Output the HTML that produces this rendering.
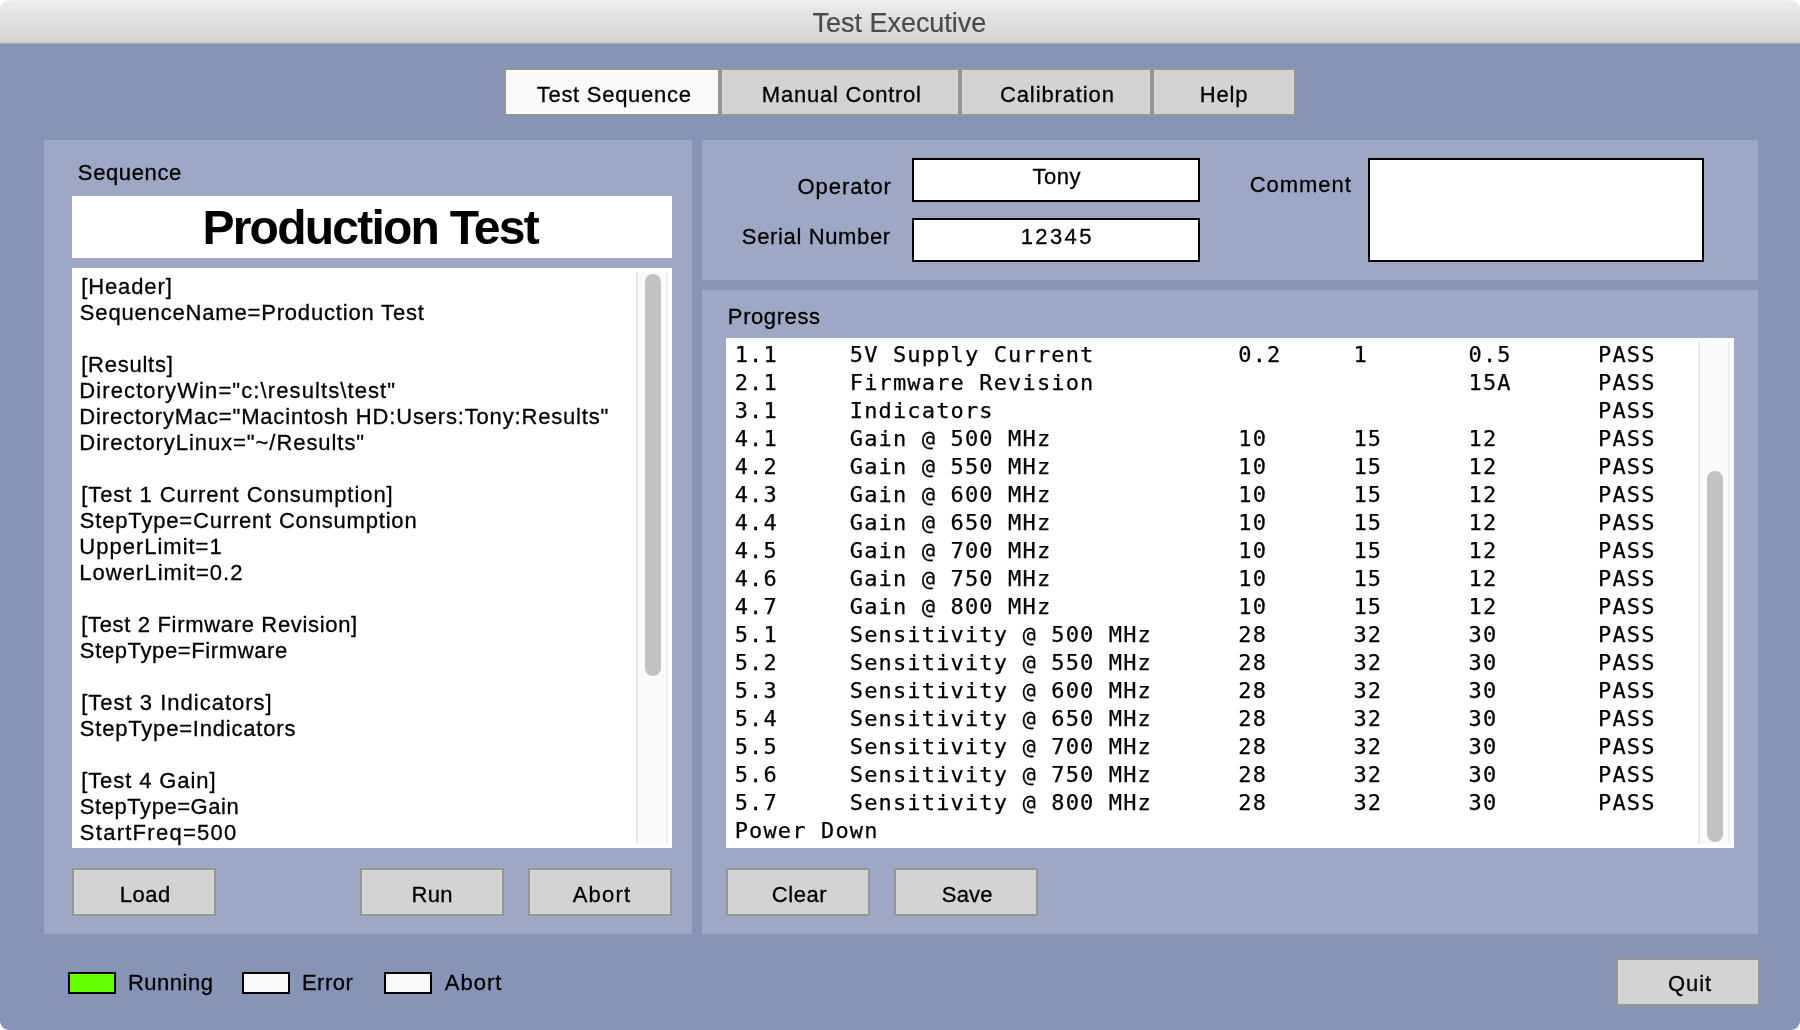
<!DOCTYPE html>
<html>
<head>
<meta charset="utf-8">
<title>Test Executive</title>
<style>
html,body{margin:0;padding:0;}
body{width:1800px;height:1030px;overflow:hidden;background:#fff;font-family:"Liberation Sans",sans-serif;color:#000;position:relative;}
#win{position:absolute;left:0;top:0;width:1800px;height:1030px;will-change:transform;}
#winbg{position:absolute;left:0;top:43px;width:1800px;height:987px;background:#8695b7;border-radius:0 0 9px 9px;}
#titlebar{position:absolute;left:0;top:0;width:1800px;height:44px;background:linear-gradient(#f4f4f4 0px,#ebebeb 2px,#d3d3d3 42px,#adadad 43.5px);border-radius:9px 9px 0 0;}
.abs{position:absolute;box-sizing:border-box;}
.panel{background:#9ea8c5;}
.t{position:absolute;white-space:pre;font-family:"Liberation Sans",sans-serif;-webkit-text-stroke:0.3px #000;}
#title{-webkit-text-stroke:0.2px #4a4a4a;}
#ptest{-webkit-text-stroke:0;}
.tab{position:absolute;top:68px;height:48px;box-sizing:border-box;border:2px solid #969696;background:#d3d3d3;}
.tab.sel{background:#fafafa;}
.btn{position:absolute;height:48px;width:144px;box-sizing:border-box;border:2px solid #969696;background:#d3d3d3;}
.white{background:#fff;}
.inp{position:absolute;box-sizing:border-box;border:2px solid #000;background:#fff;}
#seq{position:absolute;left:72px;top:268px;width:600px;height:580px;background:#fff;overflow:hidden;}
#prog{position:absolute;left:726px;top:338px;width:1008px;height:510px;background:#fff;overflow:hidden;}
#progtxt{position:absolute;left:8.7px;top:2.5px;font-family:"DejaVu Sans Mono","Liberation Mono",monospace;font-size:22px;letter-spacing:1.145px;-webkit-text-stroke:0.25px #000;}
.pr{height:28px;line-height:28px;white-space:pre;}
.track{position:absolute;background:#fafafa;border-left:2px solid #e8e8e8;border-right:2px solid #eeeeee;box-sizing:border-box;}
.thumb{position:absolute;background:#c2c2c2;border-radius:8px;}
.ind{position:absolute;top:972px;width:48px;height:22px;box-sizing:border-box;border:2px solid #000;background:#fafafa;}
</style>
</head>
<body>
<div id="win">
<div id="winbg"></div>
<div id="titlebar"></div>

<div class="tab sel" style="left:504px;width:216px;"></div>
<div class="tab" style="left:720px;width:240px;"></div>
<div class="tab" style="left:960px;width:192px;"></div>
<div class="tab" style="left:1152px;width:144px;"></div>

<div class="abs panel" style="left:44px;top:140px;width:648px;height:794px;"></div>
<div class="abs panel" style="left:702px;top:140px;width:1056px;height:140px;"></div>
<div class="abs panel" style="left:702px;top:290px;width:1056px;height:644px;"></div>

<div class="abs white" style="left:72px;top:196px;width:600px;height:62px;"></div>

<div id="seq">
<div class="track" style="left:564px;top:4px;width:32px;height:572px;"></div>
<div class="thumb" style="left:573px;top:6px;width:16px;height:402px;"></div>
</div>

<div class="btn" style="left:72px;top:868px;"></div>
<div class="btn" style="left:360px;top:868px;"></div>
<div class="btn" style="left:528px;top:868px;"></div>

<div class="inp" style="left:912px;top:158px;width:288px;height:44px;"></div>
<div class="inp" style="left:912px;top:218px;width:288px;height:44px;"></div>
<div class="inp" style="left:1368px;top:158px;width:336px;height:104px;"></div>

<div id="prog">
<div id="progtxt">
<div class="pr">1.1     5V Supply Current          0.2     1       0.5      PASS</div>
<div class="pr">2.1     Firmware Revision                          15A      PASS</div>
<div class="pr">3.1     Indicators                                          PASS</div>
<div class="pr">4.1     Gain @ 500 MHz             10      15      12       PASS</div>
<div class="pr">4.2     Gain @ 550 MHz             10      15      12       PASS</div>
<div class="pr">4.3     Gain @ 600 MHz             10      15      12       PASS</div>
<div class="pr">4.4     Gain @ 650 MHz             10      15      12       PASS</div>
<div class="pr">4.5     Gain @ 700 MHz             10      15      12       PASS</div>
<div class="pr">4.6     Gain @ 750 MHz             10      15      12       PASS</div>
<div class="pr">4.7     Gain @ 800 MHz             10      15      12       PASS</div>
<div class="pr">5.1     Sensitivity @ 500 MHz      28      32      30       PASS</div>
<div class="pr">5.2     Sensitivity @ 550 MHz      28      32      30       PASS</div>
<div class="pr">5.3     Sensitivity @ 600 MHz      28      32      30       PASS</div>
<div class="pr">5.4     Sensitivity @ 650 MHz      28      32      30       PASS</div>
<div class="pr">5.5     Sensitivity @ 700 MHz      28      32      30       PASS</div>
<div class="pr">5.6     Sensitivity @ 750 MHz      28      32      30       PASS</div>
<div class="pr">5.7     Sensitivity @ 800 MHz      28      32      30       PASS</div>
<div class="pr">Power Down</div>

</div>
<div class="track" style="left:972px;top:4px;width:32px;height:502px;"></div>
<div class="thumb" style="left:981px;top:133px;width:16px;height:371px;"></div>
</div>

<div class="btn" style="left:726px;top:868px;"></div>
<div class="btn" style="left:894px;top:868px;"></div>

<div class="ind" style="left:68px;background:#66ff00;"></div>
<div class="ind" style="left:242px;"></div>
<div class="ind" style="left:384px;"></div>

<div class="btn" style="left:1616px;top:958px;"></div>

<div class="t" id="title" style="left:812.57px;top:10.00px;font-size:27px;line-height:27px;letter-spacing:-0.026px;color:#4a4a4a;">Test Executive</div>
<div class="t" id="tab1" style="left:536.69px;top:84.00px;font-size:22px;line-height:22px;letter-spacing:0.729px;">Test Sequence</div>
<div class="t" id="tab2" style="left:761.84px;top:84.00px;font-size:22px;line-height:22px;letter-spacing:0.768px;">Manual Control</div>
<div class="t" id="tab3" style="left:1000.00px;top:84.00px;font-size:22px;line-height:22px;letter-spacing:0.874px;">Calibration</div>
<div class="t" id="tab4" style="left:1199.84px;top:84.00px;font-size:22px;line-height:22px;letter-spacing:0.771px;">Help</div>
<div class="t" id="lseq" style="left:77.85px;top:162.00px;font-size:22px;line-height:22px;letter-spacing:0.614px;">Sequence</div>
<div class="t" id="ptest" style="left:202.42px;top:204.00px;font-size:48px;line-height:48px;letter-spacing:-1.755px;font-weight:700;">Production Test</div>
<div class="t" id="lop" style="left:797.58px;top:176.00px;font-size:22px;line-height:22px;letter-spacing:0.931px;">Operator</div>
<div class="t" id="lsn" style="left:741.85px;top:226.00px;font-size:22px;line-height:22px;letter-spacing:0.643px;">Serial Number</div>
<div class="t" id="lcom" style="left:1249.76px;top:174.00px;font-size:22px;line-height:22px;letter-spacing:0.942px;">Comment</div>
<div class="t" id="tony" style="left:1032.57px;top:166.00px;font-size:22px;line-height:22px;letter-spacing:0.484px;">Tony</div>
<div class="t" id="sn" style="left:1020.73px;top:226.00px;font-size:22px;line-height:22px;letter-spacing:2.390px;">12345</div>
<div class="t" id="lprog" style="left:727.87px;top:306.00px;font-size:22px;line-height:22px;letter-spacing:0.592px;">Progress</div>
<div class="t" id="bload" style="left:119.84px;top:884.00px;font-size:22px;line-height:22px;letter-spacing:0.505px;">Load</div>
<div class="t" id="brun" style="left:411.57px;top:884.00px;font-size:22px;line-height:22px;letter-spacing:0.249px;">Run</div>
<div class="t" id="babort" style="left:572.70px;top:884.00px;font-size:22px;line-height:22px;letter-spacing:1.237px;">Abort</div>
<div class="t" id="bclear" style="left:771.73px;top:884.00px;font-size:22px;line-height:22px;letter-spacing:0.602px;">Clear</div>
<div class="t" id="bsave" style="left:941.80px;top:884.00px;font-size:22px;line-height:22px;letter-spacing:0.182px;">Save</div>
<div class="t" id="bquit" style="left:1667.97px;top:973.00px;font-size:22px;line-height:22px;letter-spacing:0.908px;">Quit</div>
<div class="t" id="irun" style="left:127.95px;top:972.00px;font-size:22px;line-height:22px;letter-spacing:0.503px;">Running</div>
<div class="t" id="ierr" style="left:301.89px;top:972.00px;font-size:22px;line-height:22px;letter-spacing:0.505px;">Error</div>
<div class="t" id="iabt" style="left:444.84px;top:972.00px;font-size:22px;line-height:22px;letter-spacing:1.010px;">Abort</div>
<div class="t" id="seq0" style="left:81.21px;top:276.00px;font-size:22px;line-height:22px;letter-spacing:0.885px;">[Header]</div>
<div class="t" id="seq1" style="left:79.86px;top:302.00px;font-size:22px;line-height:22px;letter-spacing:0.821px;">SequenceName=Production Test</div>
<div class="t" id="seq3" style="left:81.21px;top:354.00px;font-size:22px;line-height:22px;letter-spacing:0.747px;">[Results]</div>
<div class="t" id="seq4" style="left:79.32px;top:380.00px;font-size:22px;line-height:22px;letter-spacing:1.099px;">DirectoryWin="c:\results\test"</div>
<div class="t" id="seq5" style="left:79.32px;top:406.00px;font-size:22px;line-height:22px;letter-spacing:0.828px;">DirectoryMac="Macintosh HD:Users:Tony:Results"</div>
<div class="t" id="seq6" style="left:79.32px;top:432.00px;font-size:22px;line-height:22px;letter-spacing:0.937px;">DirectoryLinux="~/Results"</div>
<div class="t" id="seq8" style="left:81.21px;top:484.00px;font-size:22px;line-height:22px;letter-spacing:0.940px;">[Test 1 Current Consumption]</div>
<div class="t" id="seq9" style="left:79.86px;top:510.00px;font-size:22px;line-height:22px;letter-spacing:0.810px;">StepType=Current Consumption</div>
<div class="t" id="seq10" style="left:79.35px;top:536.00px;font-size:22px;line-height:22px;letter-spacing:0.990px;">UpperLimit=1</div>
<div class="t" id="seq11" style="left:79.32px;top:562.00px;font-size:22px;line-height:22px;letter-spacing:1.028px;">LowerLimit=0.2</div>
<div class="t" id="seq13" style="left:81.21px;top:614.00px;font-size:22px;line-height:22px;letter-spacing:0.673px;">[Test 2 Firmware Revision]</div>
<div class="t" id="seq14" style="left:79.86px;top:640.00px;font-size:22px;line-height:22px;letter-spacing:0.621px;">StepType=Firmware</div>
<div class="t" id="seq16" style="left:81.21px;top:692.00px;font-size:22px;line-height:22px;letter-spacing:1.005px;">[Test 3 Indicators]</div>
<div class="t" id="seq17" style="left:79.86px;top:718.00px;font-size:22px;line-height:22px;letter-spacing:0.797px;">StepType=Indicators</div>
<div class="t" id="seq19" style="left:81.21px;top:770.00px;font-size:22px;line-height:22px;letter-spacing:0.902px;">[Test 4 Gain]</div>
<div class="t" id="seq20" style="left:79.86px;top:796.00px;font-size:22px;line-height:22px;letter-spacing:0.550px;">StepType=Gain</div>
<div class="t" id="seq21" style="left:79.86px;top:822.00px;font-size:22px;line-height:22px;letter-spacing:1.258px;">StartFreq=500</div>
</div>
</body>
</html>
